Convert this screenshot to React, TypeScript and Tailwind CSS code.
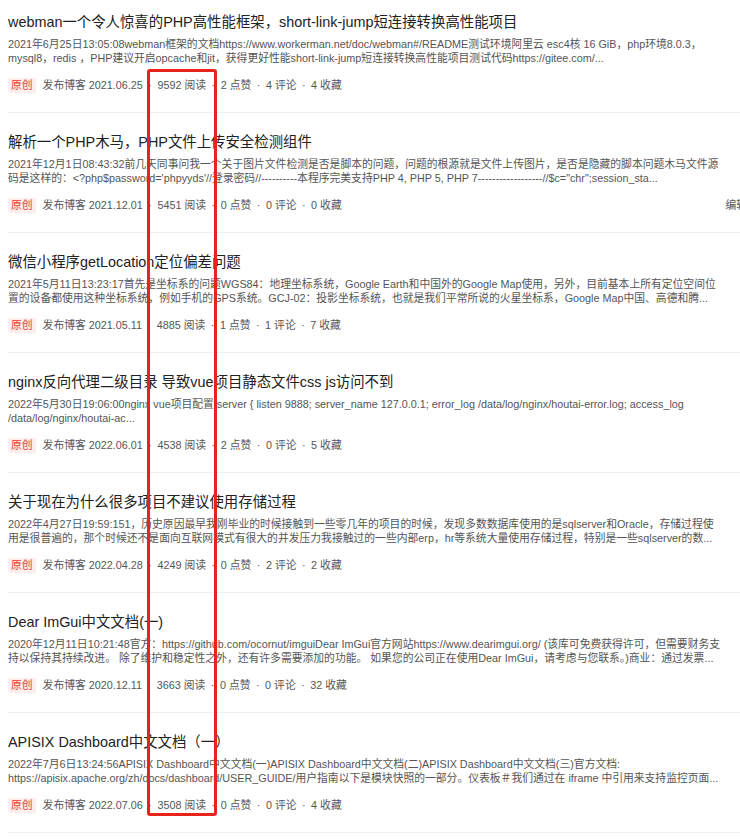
import React from "react";

type Post = {
  title: string;
  line1: string;
  line2: string;
  date: string;
  views: string;
  likes: string;
  comments: string;
  favs: string;
  edit?: boolean;
};

const posts: Post[] = [
  {
    title: "webman一个令人惊喜的PHP高性能框架，short-link-jump短连接转换高性能项目",
    line1:
      "2021年6月25日13:05:08webman框架的文档https://www.workerman.net/doc/webman#/README测试环境阿里云 esc4核 16 GiB，php环境8.0.3，",
    line2:
      "mysql8，redis ，PHP建议开启opcache和jit，获得更好性能short-link-jump短连接转换高性能项目测试代码https://gitee.com/...",
    date: "2021.06.25",
    views: "9592",
    likes: "2",
    comments: "4",
    favs: "4",
  },
  {
    title: "解析一个PHP木马，PHP文件上传安全检测组件",
    line1:
      "2021年12月1日08:43:32前几天同事问我一个关于图片文件检测是否是脚本的问题，问题的根源就是文件上传图片，是否是隐藏的脚本问题木马文件源",
    line2:
      "码是这样的：<?php$password='phpyyds'//登录密码//----------本程序完美支持PHP 4, PHP 5, PHP 7------------------//$c=\"chr\";session_sta...",
    date: "2021.12.01",
    views: "5451",
    likes: "0",
    comments: "0",
    favs: "0",
    edit: true,
  },
  {
    title: "微信小程序getLocation定位偏差问题",
    line1:
      "2021年5月11日13:23:17首先是坐标系的问题WGS84：地理坐标系统，Google Earth和中国外的Google Map使用，另外，目前基本上所有定位空间位",
    line2:
      "置的设备都使用这种坐标系统，例如手机的GPS系统。GCJ-02：投影坐标系统，也就是我们平常所说的火星坐标系，Google Map中国、高德和腾...",
    date: "2021.05.11",
    views: "4885",
    likes: "1",
    comments: "1",
    favs: "7",
  },
  {
    title: "nginx反向代理二级目录 导致vue项目静态文件css js访问不到",
    line1:
      "2022年5月30日19:06:00nginx vue项目配置 server { listen 9888; server_name 127.0.0.1; error_log /data/log/nginx/houtai-error.log; access_log",
    line2: "/data/log/nginx/houtai-ac...",
    date: "2022.06.01",
    views: "4538",
    likes: "2",
    comments: "0",
    favs: "5",
  },
  {
    title: "关于现在为什么很多项目不建议使用存储过程",
    line1:
      "2022年4月27日19:59:151，历史原因最早我刚毕业的时候接触到一些零几年的项目的时候，发现多数数据库使用的是sqlserver和Oracle，存储过程使",
    line2:
      "用是很普遍的，那个时候还不是面向互联网模式有很大的并发压力我接触过的一些内部erp，hr等系统大量使用存储过程，特别是一些sqlserver的数...",
    date: "2022.04.28",
    views: "4249",
    likes: "0",
    comments: "2",
    favs: "2",
  },
  {
    title: "Dear ImGui中文文档(一)",
    line1:
      "2020年12月11日10:21:48官方：https://github.com/ocornut/imguiDear ImGui官方网站https://www.dearimgui.org/ (该库可免费获得许可，但需要财务支",
    line2:
      "持以保持其持续改进。 除了维护和稳定性之外，还有许多需要添加的功能。 如果您的公司正在使用Dear ImGui，请考虑与您联系。)商业：通过发票...",
    date: "2020.12.11",
    views: "3663",
    likes: "0",
    comments: "0",
    favs: "32",
  },
  {
    title: "APISIX Dashboard中文文档（一）",
    line1:
      "2022年7月6日13:24:56APISIX Dashboard中文文档(一)APISIX Dashboard中文文档(二)APISIX Dashboard中文文档(三)官方文档:",
    line2:
      "https://apisix.apache.org/zh/docs/dashboard/USER_GUIDE/用户指南以下是模块快照的一部分。仪表板＃我们通过在 iframe 中引用来支持监控页面...",
    date: "2022.07.06",
    views: "3508",
    likes: "0",
    comments: "0",
    favs: "4",
  },
];

function Dot() {
  return <span className="mx-[5.5px]">·</span>;
}

function PostItem({ post, first }: { post: Post; first: boolean }) {
  return (
    <div
      className={`border-b border-[#f0f0f0] pb-[20px] ${first ? "pt-[12px]" : "pt-[19px]"}`}
    >
      {/* title */}
      <div className="text-[14.4px] leading-[20px] text-[#222] whitespace-nowrap">
        {post.title}
      </div>

      {/* summary */}
      <div className="mt-[5px] text-[10.8px] leading-[14px] text-[#555] whitespace-nowrap">
        <div>{post.line1}</div>
        <div>{post.line2}</div>
      </div>

      {/* meta */}
      <div className="mt-[13px] flex items-center h-[14px] text-[10.8px] text-[#555] whitespace-nowrap">
        <span className="h-[15px] leading-[15px] px-[3px] bg-[#fdeeee] text-[#e33e33] rounded-[2px]">
          原创
        </span>
        <span className="ml-[7px]">发布博客 {post.date}</span>
        <Dot />
        <span>{post.views} 阅读</span>
        <Dot />
        <span>{post.likes} 点赞</span>
        <Dot />
        <span>{post.comments} 评论</span>
        <Dot />
        <span>{post.favs} 收藏</span>
        {post.edit && <span className="ml-auto mr-[5px] text-[#555]">编辑</span>}
      </div>
    </div>
  );
}

export default function App() {
  return (
    <div
      className="relative w-[740px] h-[839px] overflow-hidden bg-white"
      style={{ fontFamily: '"Liberation Sans", Arial, "Noto Sans CJK SC", sans-serif' }}
    >
      {/* article list */}
      <div className="w-[760px] px-[8px]">
        {posts.map((p, i) => (
          <PostItem key={p.title} post={p} first={i === 0} />
        ))}
      </div>

      {/* red highlight around the view counts */}
      <div className="absolute left-[147px] top-[69px] w-[70px] h-[747px] border-[3px] border-[#e8231c] rounded-[3px] pointer-events-none" />
    </div>
  );
}
